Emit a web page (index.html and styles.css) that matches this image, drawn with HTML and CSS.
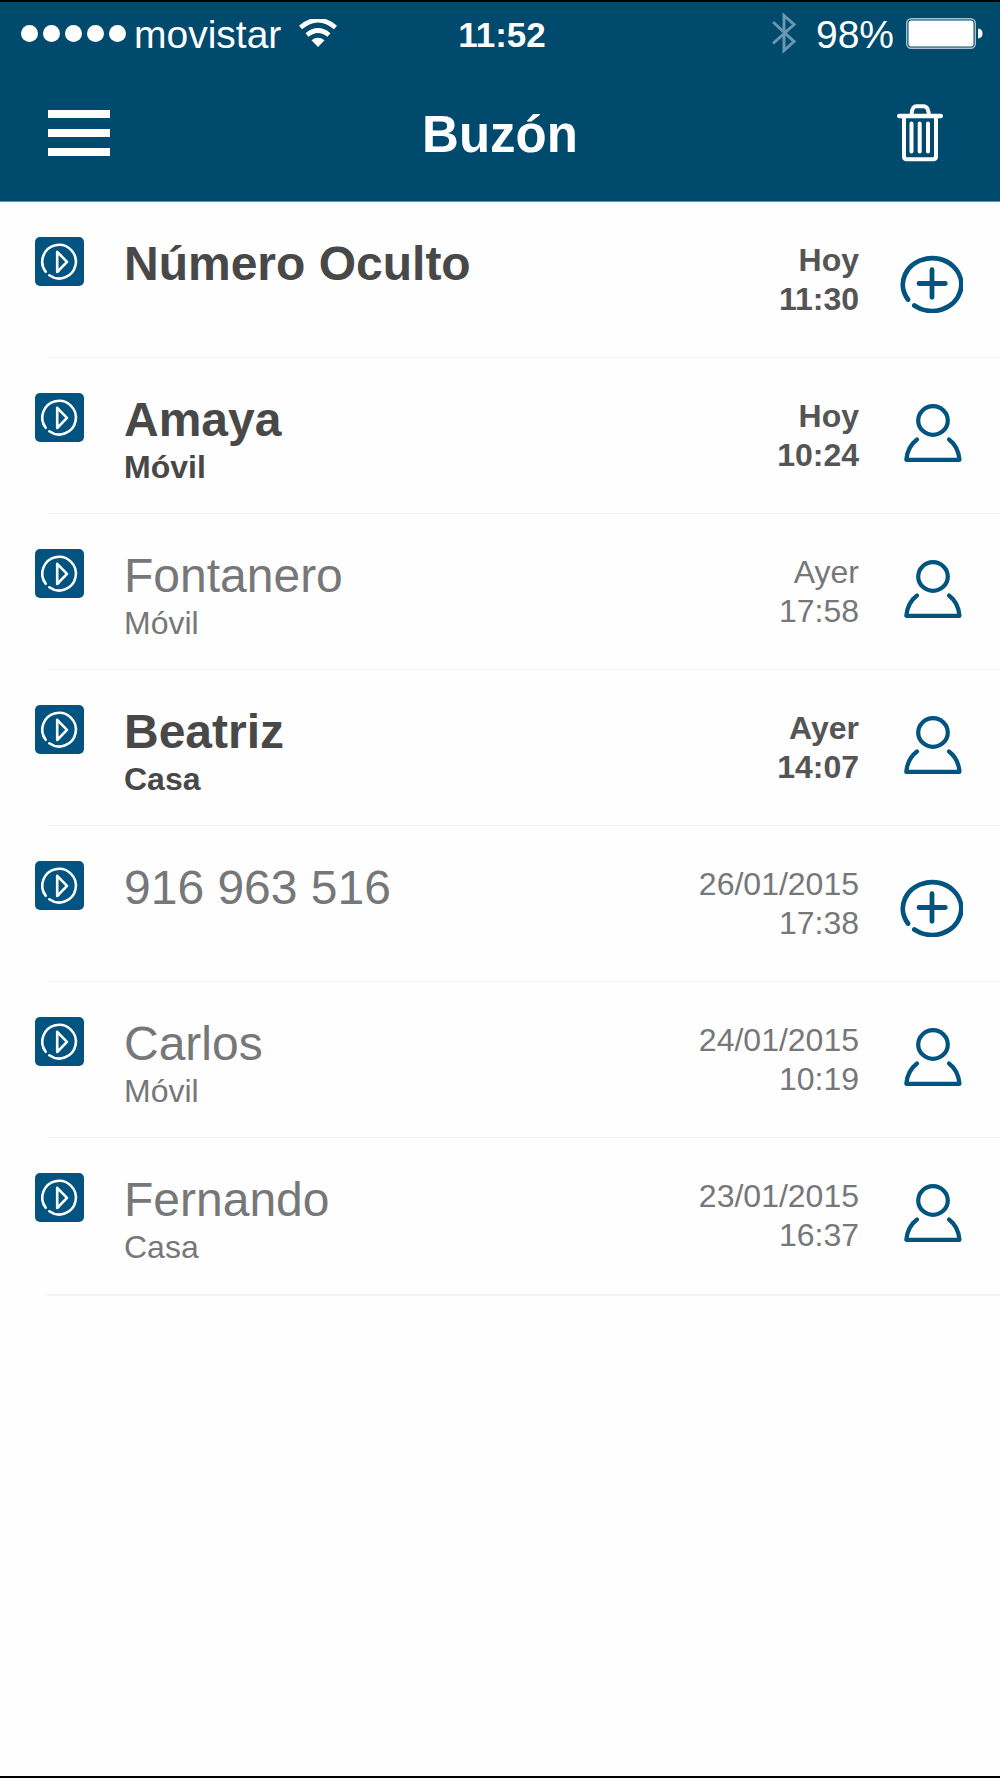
FILE: index.html
```html
<!DOCTYPE html>
<html lang="es">
<head>
<meta charset="utf-8">
<meta name="viewport" content="width=device-width, initial-scale=1">
<title>Buzón</title>
<link rel="stylesheet" href="styles.css">
</head>
<body>
<svg class="sprite" aria-hidden="true">
  <symbol id="icon-play" viewBox="0 0 49 49">
    <rect width="49" height="49" rx="5" fill="#00547f"/>
    <path d="M10.700 34.800A16.800 16.800 0 1 1 14.300 38.300M22.200 14.800V35L32 24.900Z" fill="none" stroke="#fff" stroke-width="2.600" stroke-linecap="round" stroke-linejoin="round"/>
  </symbol>
  <symbol id="icon-add" viewBox="0 0 63 58">
    <path d="M8 44.500A29.200 26.400 0 1 1 14.300 50.500M19 28.500H45.300M32 14.700V42.300" fill="none" stroke="#00547f" stroke-width="4.800" stroke-linecap="round"/>
  </symbol>
  <symbol id="icon-person" viewBox="0 0 63 58">
    <ellipse cx="33" cy="16.500" rx="14.800" ry="14.300" fill="none" stroke="#00547f" stroke-width="4.200"/>
    <path d="M17 35.500C11 40 7 48 6.300 55.800H59.500C58.800 48 55 40 49 35.500" fill="none" stroke="#00547f" stroke-width="4.200" stroke-linecap="round" stroke-linejoin="round"/>
  </symbol>
</svg>

<header class="header">
  <div class="status">
    <div class="status-left">
      <span class="signal"><i class="dot"></i><i class="dot"></i><i class="dot"></i><i class="dot"></i><i class="dot"></i></span>
      <span class="status-text">movistar</span>
      <svg class="wifi" viewBox="0 0 38 28" aria-hidden="true">
        <path d="M1.500 8.500Q19-6.500 36.500 8.500M8 16Q19 7 30 16" fill="none" stroke="#fff" stroke-width="4.600"/>
        <path d="M12.500 21.200Q19 16.500 25.500 21.200L19 28Z" fill="#fff"/>
      </svg>
    </div>
    <time class="clock status-text">11:52</time>
    <div class="status-right">
      <svg class="bluetooth" viewBox="0 0 24 42" aria-hidden="true">
        <path d="M1 10L22 29.500L12 38.500V3.500L22 12.500L1 31.500" fill="none" stroke="#6a97ad" stroke-width="3"/>
      </svg>
      <span class="status-text">98%</span>
      <svg class="battery" viewBox="0 0 77 31" aria-hidden="true">
        <rect x="0.700" y="0.700" width="68.600" height="29.600" rx="4.500" fill="none" stroke="#a9c2cf" stroke-width="1.400"/>
        <rect x="2.500" y="2.500" width="65" height="26" rx="2.500" fill="#fff"/>
        <path d="M72 10.500Q76.500 11 76.500 15.500T72 20.500Z" fill="#fff"/>
      </svg>
    </div>
  </div>
  <nav class="bar">
    <button class="menu" type="button" aria-label="Menú">
      <svg width="62" height="46" viewBox="0 0 62 46"><path d="M0 4H62M0 23H62M0 42H62" stroke="#fff" stroke-width="8"/></svg>
    </button>
    <h1 class="title">Buzón</h1>
    <button class="trash" type="button" aria-label="Eliminar">
      <svg width="46" height="58" viewBox="0 0 46 58"><path d="M2.300 12H43.700" stroke="#fff" stroke-width="4.600" stroke-linecap="round"/><path d="M14.500 11Q15 2.300 19 2.300H27Q31 2.300 32 11M7 13V52.500Q7 55.300 10 55.300H36Q39 55.300 39 52.500V13" fill="none" stroke="#fff" stroke-width="4"/><path d="M14.500 19.500V47.500M22.700 19.500V47.500M31 19.500V47.500" stroke="#fff" stroke-width="4" stroke-linecap="round"/></svg>
    </button>
  </nav>
</header>

<main>
  <ul class="messages">
    <li class="message unread">
      <button class="play" type="button" aria-label="Reproducir"><svg><use href="#icon-play"/></svg></button>
      <div class="caller"><h2 class="name">Número Oculto</h2></div>
      <div class="when">Hoy<br>11:30</div>
      <button class="contact" type="button" aria-label="Añadir contacto"><svg class="add"><use href="#icon-add"/></svg></button>
    </li>
    <li class="message unread">
      <button class="play" type="button" aria-label="Reproducir"><svg><use href="#icon-play"/></svg></button>
      <div class="caller"><h2 class="name">Amaya</h2><p class="kind">Móvil</p></div>
      <div class="when">Hoy<br>10:24</div>
      <button class="contact" type="button" aria-label="Ver contacto"><svg><use href="#icon-person"/></svg></button>
    </li>
    <li class="message">
      <button class="play" type="button" aria-label="Reproducir"><svg><use href="#icon-play"/></svg></button>
      <div class="caller"><h2 class="name">Fontanero</h2><p class="kind">Móvil</p></div>
      <div class="when">Ayer<br>17:58</div>
      <button class="contact" type="button" aria-label="Ver contacto"><svg><use href="#icon-person"/></svg></button>
    </li>
    <li class="message unread">
      <button class="play" type="button" aria-label="Reproducir"><svg><use href="#icon-play"/></svg></button>
      <div class="caller"><h2 class="name">Beatriz</h2><p class="kind">Casa</p></div>
      <div class="when">Ayer<br>14:07</div>
      <button class="contact" type="button" aria-label="Ver contacto"><svg><use href="#icon-person"/></svg></button>
    </li>
    <li class="message">
      <button class="play" type="button" aria-label="Reproducir"><svg><use href="#icon-play"/></svg></button>
      <div class="caller"><h2 class="name">916 963 516</h2></div>
      <div class="when">26/01/2015<br>17:38</div>
      <button class="contact" type="button" aria-label="Añadir contacto"><svg class="add"><use href="#icon-add"/></svg></button>
    </li>
    <li class="message">
      <button class="play" type="button" aria-label="Reproducir"><svg><use href="#icon-play"/></svg></button>
      <div class="caller"><h2 class="name">Carlos</h2><p class="kind">Móvil</p></div>
      <div class="when">24/01/2015<br>10:19</div>
      <button class="contact" type="button" aria-label="Ver contacto"><svg><use href="#icon-person"/></svg></button>
    </li>
    <li class="message">
      <button class="play" type="button" aria-label="Reproducir"><svg><use href="#icon-play"/></svg></button>
      <div class="caller"><h2 class="name">Fernando</h2><p class="kind">Casa</p></div>
      <div class="when">23/01/2015<br>16:37</div>
      <button class="contact" type="button" aria-label="Ver contacto"><svg><use href="#icon-person"/></svg></button>
    </li>
  </ul>
</main>
</body>
</html>
```
FILE: styles.css
```css
* {
  box-sizing: border-box;
  margin: 0;
  padding: 0;
}

body {
  min-height: 100vh;
  border-top: 2px solid #000;
  border-bottom: 2px solid #000;
  background: #fefefe;
  color: #767778;
  font-family: "Liberation Sans", Arial, Helvetica, sans-serif;
  font-size: 32px;
}

button {
  display: block;
  border: 0;
  background: none;
  cursor: pointer;
}

svg {
  display: block;
}

.sprite {
  display: none;
}

/* Header */
.header {
  border-bottom: 1px solid #668fa8;
  background: #004a6e;
  color: #fff;
}

.status {
  display: grid;
  grid-template-columns: 1fr auto 1fr;
  align-items: center;
  height: 62px;
  padding: 0 17px 0 21px;
  font-size: 39px;
}

.status-left,
.status-right {
  display: flex;
  align-items: center;
}

.status-right {
  justify-content: flex-end;
}

.status-text {
  padding-top: 3px;
}

.signal {
  display: flex;
  gap: 5px;
  margin-right: 8px;
}

.dot {
  width: 17px;
  height: 17px;
  border-radius: 50%;
  background: #fff;
}

.wifi {
  width: 38px;
  height: 28px;
  margin-left: 18px;
}

.clock {
  font-size: 35px;
  font-weight: bold;
}

.bluetooth {
  width: 24px;
  height: 42px;
  margin-right: 20px;
}

.battery {
  width: 77px;
  height: 31px;
  margin-left: 12px;
}

.bar {
  display: grid;
  grid-template-columns: 1fr auto 1fr;
  align-items: center;
  height: 137px;
  padding: 0 48px;
}

.menu {
  justify-self: start;
}

.trash {
  justify-self: end;
  margin-right: 9px;
}

.title {
  padding-top: 3px;
  font-size: 51px;
}

/* Message list */
.messages {
  list-style: none;
  padding-left: 47px;
}

.message {
  display: flex;
  align-items: flex-start;
  height: 156px;
  padding-right: 37px;
  border-bottom: 1px solid #f3f3f4;
}

.message:last-child {
  height: 158px;
  border-bottom-width: 2px;
}

.play {
  margin: 35px 40px 0 -12px;
}

.play svg {
  width: 49px;
  height: 49px;
}

.caller {
  flex: 1;
  padding-top: 34px;
}

.name {
  font-size: 48px;
  font-weight: normal;
  line-height: 56px;
}

.kind {
  line-height: 38px;
}

.when {
  padding-top: 39px;
  line-height: 39px;
  text-align: right;
}

.contact {
  margin: 46px 0 0 41px;
}

.contact svg {
  width: 63px;
  height: 58px;
}

.contact .add {
  margin-top: 7px;
}

.unread .name,
.unread .kind {
  color: #484848;
  font-weight: bold;
}

.unread .when {
  color: #555;
  font-weight: bold;
}
```
